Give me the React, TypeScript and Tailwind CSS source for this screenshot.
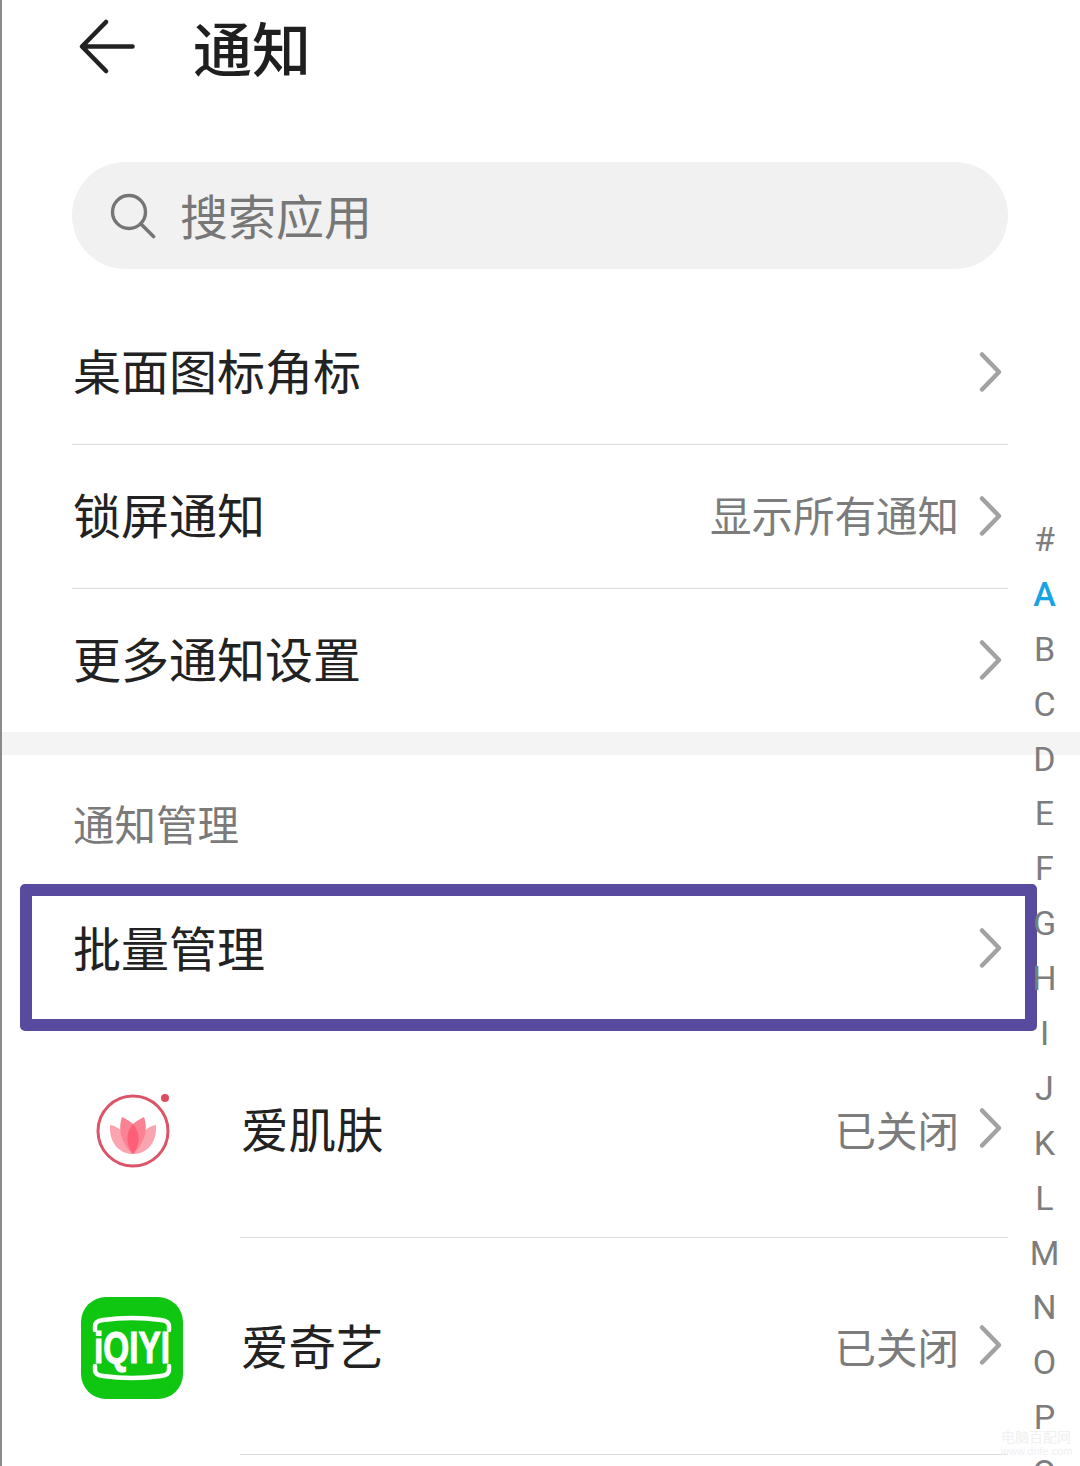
import React from "react";

const cjk = "font-['Noto_Sans_CJK_SC','Noto_Sans',sans-serif]";

function Chevron() {
  return (
    <svg width="26" height="44" viewBox="0 0 26 44" fill="none" className="shrink-0">
      <path d="M5 3.5 L22 21 L5 38.5" stroke="#a2a2a2" strokeWidth="4.5" strokeLinecap="round" strokeLinejoin="round" />
    </svg>
  );
}

function Row({ label, value, divider = true, h = "h-[144px]" }: { label: string; value?: string; divider?: boolean; h?: string }) {
  return (
    <div className={`flex items-center ${h} ${divider ? "border-b border-[#dcdcdc]" : ""}`}>
      <span className="flex-1 text-[48px] leading-none text-[#222] pl-[1px] pb-[7px]">{label}</span>
      {value && <span className="text-[41.5px] leading-none text-[#7c7c7c] mr-[18px] pb-[3px]">{value}</span>}
      <div className="mr-[5px]"><Chevron /></div>
    </div>
  );
}

function Lotus() {
  return (
    <svg width="86" height="86" viewBox="0 0 86 86" fill="none">
      <circle cx="38" cy="48" r="35" stroke="#dc5468" strokeWidth="3" fill="#fff" />
      <circle cx="70" cy="15" r="4" fill="#dd4b60" />
      <path d="M15 42 C24 43 33 52 38 71 C25 71 14 61 15 42 Z" fill="#fba3ae" />
      <path d="M61 42 C52 43 43 52 38 71 C51 71 62 61 61 42 Z" fill="#fba3ae" />
      <path d="M27 34 C31 36 35 38 38 41 C41 38 45 36 49 34 C54 48 48 62 38 71 C28 62 22 48 27 34 Z" fill="#fb8194" />
      <path d="M38 41 C45 49 46 61 38 71 C30 61 31 49 38 41 Z" fill="#fc5f77" />
    </svg>
  );
}

function Iqiyi() {
  return (
    <div className="w-[102px] h-[102px] rounded-[25px] bg-[#0fc711] flex items-center justify-center">
      <svg width="102" height="102" viewBox="0 0 102 102" fill="none">
        <path d="M14 33 V29 Q14 24 22 23 Q51 19 80 23 Q88 24 88 29 V33" stroke="#fff" strokeWidth="4.5" strokeLinecap="round" />
        <path d="M14 69 V73 Q14 78 22 79 Q51 83 80 79 Q88 78 88 73 V69" stroke="#fff" strokeWidth="4.5" strokeLinecap="round" />
        <text x="51" y="66" textAnchor="middle" fill="#fff" stroke="#fff" strokeWidth="1" fontFamily="'Liberation Sans', sans-serif" fontWeight="700" fontSize="44" textLength="76" lengthAdjust="spacingAndGlyphs">iQIYI</text>
      </svg>
    </div>
  );
}

function AppRow({ name, icon, iconClass }: { name: string; icon: React.ReactNode; iconClass: string }) {
  return (
    <div className="flex h-[217px]">
      <div className={`w-[168px] shrink-0 flex items-center justify-start ${iconClass}`}>{icon}</div>
      <div className="flex-1 flex items-center border-b border-[#dcdcdc]">
        <span className="flex-1 text-[47.5px] leading-none text-[#222] pl-[1px] pb-[2px]">{name}</span>
        <span className="text-[41.5px] leading-none text-[#7c7c7c] mr-[18px] pt-[1px]">已关闭</span>
        <div className="mr-[5px]"><Chevron /></div>
      </div>
    </div>
  );
}

const letters = ["#", "A", "B", "C", "D", "E", "F", "G", "H", "I", "J", "K", "L", "M", "N", "O", "P", "Q"];

export default function App() {
  return (
    <div className={`relative w-[1080px] h-[1466px] overflow-hidden bg-white border-l-2 border-[#8a8a8a] ${cjk}`}>
      <header className="flex items-center h-[100px] pl-[76px]">
        <svg width="60" height="58" viewBox="0 0 60 58" fill="none" className="shrink-0 -mt-[6px]">
          <path d="M54.5 28.5 H5 M28 4 L4 28.5 L28 53" stroke="#222" strokeWidth="4.6" strokeLinecap="round" strokeLinejoin="round" />
        </svg>
        <h1 className="ml-[55px] pb-[8px] text-[59px] leading-none font-medium text-[#1f1f1f]">通知</h1>
      </header>

      <div className="mt-[62px] ml-[70px] mr-[72px] h-[107px] rounded-full bg-[#f1f1f1] flex items-center pl-[38px]">
        <svg width="46" height="46" viewBox="0 0 46 46" fill="none" className="shrink-0">
          <circle cx="19" cy="19" r="16.5" stroke="#757575" strokeWidth="3.4" />
          <path d="M31 31 L43.5 43.5" stroke="#757575" strokeWidth="3.6" strokeLinecap="round" />
        </svg>
        <span className="ml-[24px] pb-[3px] text-[48px] leading-none text-[#777]">搜索应用</span>
      </div>

      <section className="ml-[70px] mr-[72px] mt-[32px]">
        <Row label="桌面图标角标" />
        <Row label="锁屏通知" value="显示所有通知" />
        <Row label="更多通知设置" divider={false} h="h-[143px]" />
      </section>

      <div className="h-[23px] bg-[#f4f4f4]" />

      <section className="ml-[70px] mr-[72px]">
        <div className="h-[122px] flex items-end pb-[33px] pl-[1px] text-[41.5px] leading-none text-[#7a7a7a]">通知管理</div>
        <Row label="批量管理" divider={false} />
        <AppRow name="爱肌肤" icon={<Lotus />} iconClass="pl-[23px] pb-[7px]" />
        <AppRow name="爱奇艺" icon={<Iqiyi />} iconClass="pl-[9px] pt-[3px]" />
      </section>

      <div className="absolute left-[18px] top-[884px] w-[1017px] h-[147px] border-[12px] border-[#574a9f] rounded-[5px]" />

      <nav className="absolute left-[1022px] top-[512px] w-[41px] flex flex-col items-center font-['Roboto',sans-serif] text-[#7d7d7d] text-[34px] leading-[55px]">
        {letters.map((l) => (
          <span key={l} className={l === "A" ? "h-[54.9px] text-[#17a4e4] font-medium" : "h-[54.9px]"}>{l}</span>
        ))}
      </nav>

      <div className="absolute left-[999px] top-[1429px] text-[14px] leading-[15px] text-[#f0f0f0]">
        <div>电脑百配网</div>
        <div className="font-['Liberation_Sans',sans-serif] text-[11px]">www.dnfe.com</div>
      </div>
    </div>
  );
}
